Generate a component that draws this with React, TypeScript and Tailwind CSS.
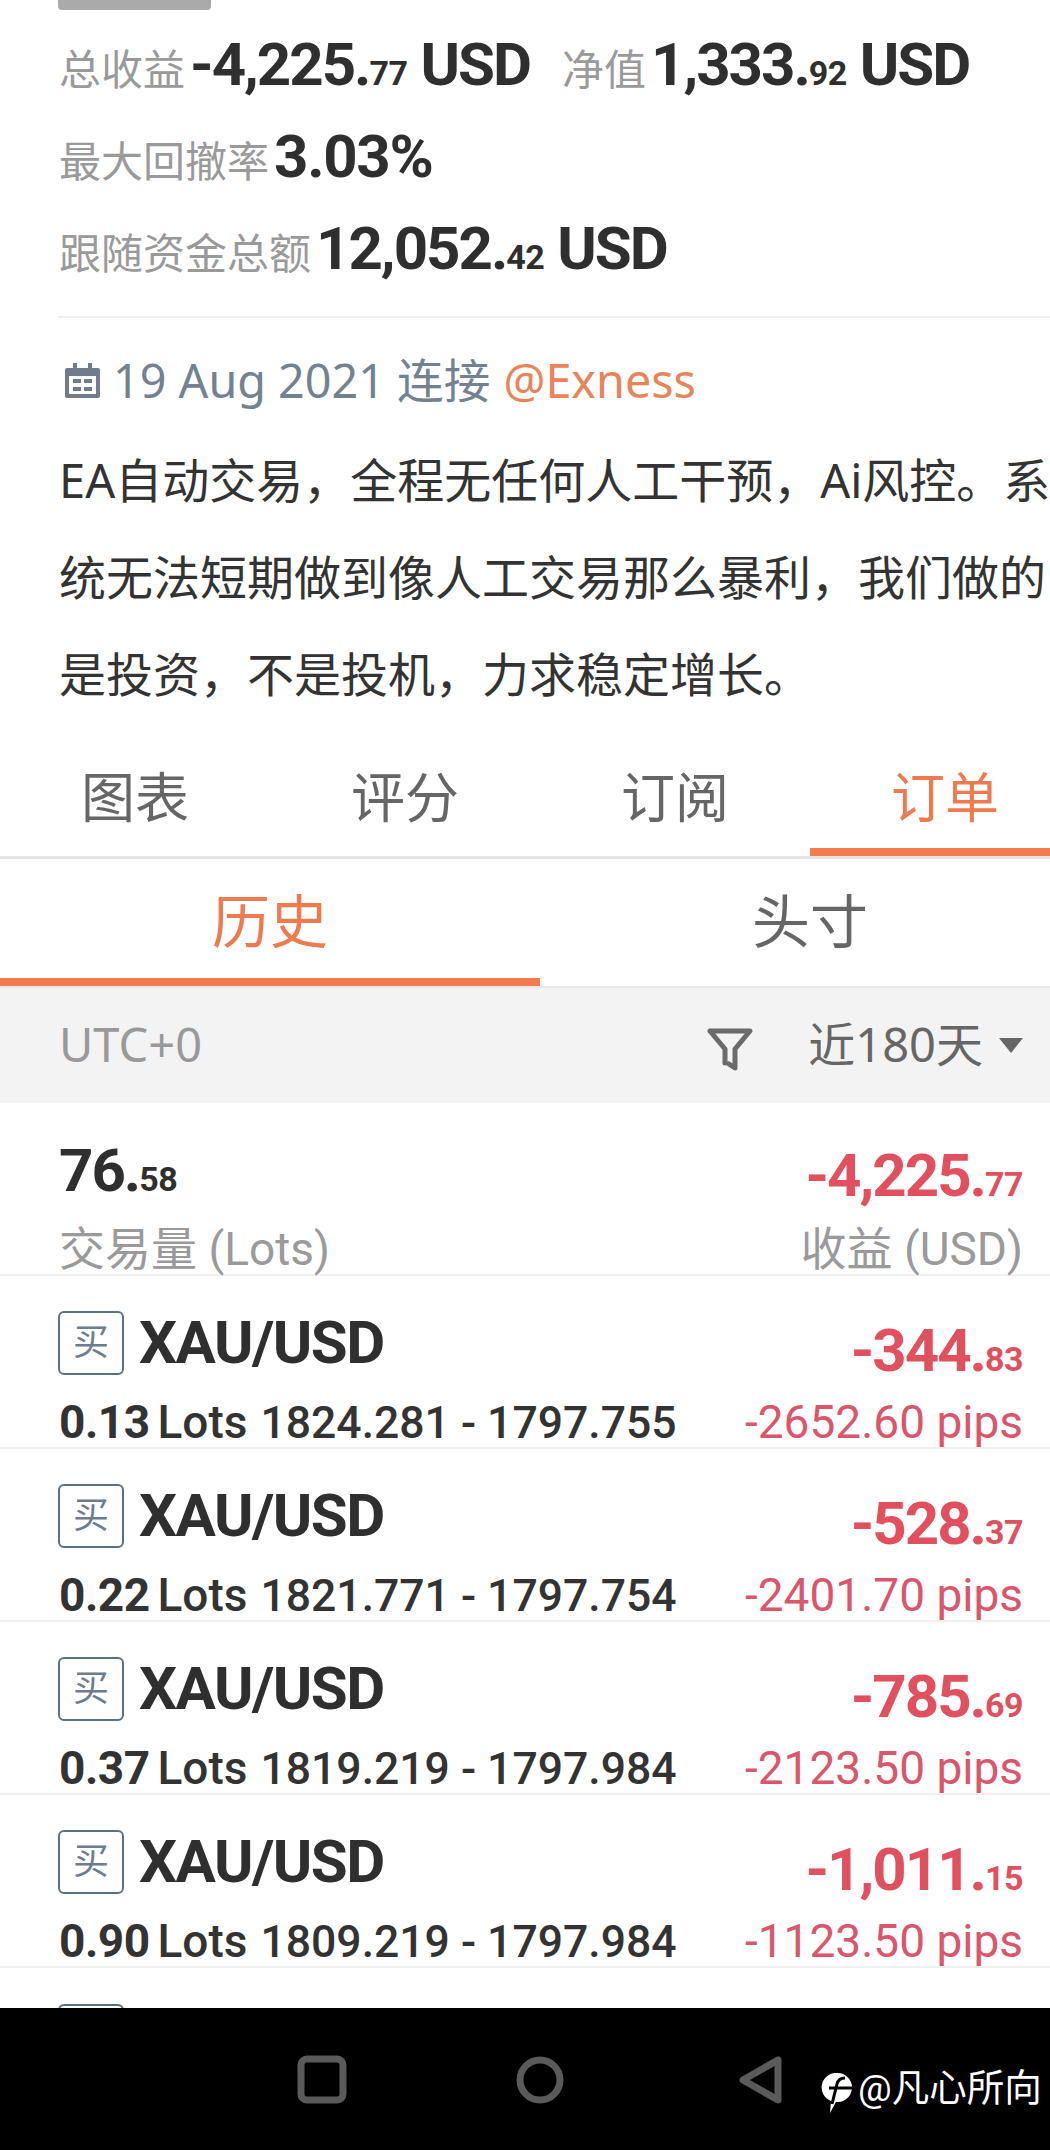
const FONT = "font-['Roboto','Noto_Sans_CJK_SC',sans-serif]";
const NOTO = "font-['Noto_Sans','Noto_Sans_CJK_SC',sans-serif]";

function Money({ whole, dec, color = "" }: { whole: string; dec: string; color?: string }) {
  return (
    <span className={`font-bold ${color}`}>
      <span className="text-[60px] tracking-[-2px]">{whole}</span>
      <span className="text-[34px] tracking-[-0.5px]">{dec}</span>
    </span>
  );
}

function Stat({ label, children }: { label: string; children: React.ReactNode }) {
  return (
    <>
      <span className="text-[42px] text-[#9a9a9a] mr-[5px]">{label}</span>
      {children}
    </>
  );
}

function Usd() {
  return <span className="text-[60px] font-bold tracking-[-2px]"> USD</span>;
}

const orders = [
  { pnl: "-344.", dec: "83", lots: "0.13", range: "1824.281 - 1797.755", pips: "-2652.60 pips" },
  { pnl: "-528.", dec: "37", lots: "0.22", range: "1821.771 - 1797.754", pips: "-2401.70 pips" },
  { pnl: "-785.", dec: "69", lots: "0.37", range: "1819.219 - 1797.984", pips: "-2123.50 pips" },
  { pnl: "-1,011.", dec: "15", lots: "0.90", range: "1809.219 - 1797.984", pips: "-1123.50 pips" },
];

function Order({ o }: { o: (typeof orders)[number] }) {
  return (
    <div className="h-[173px] border-b-2 border-[#f0f0f0] pr-[27px] pl-[58px] flex flex-col whitespace-nowrap">
      <div className="flex justify-between h-[121px] pt-[35px]">
        <div className="flex items-start">
          <div className="w-[66px] h-[64px] border-2 border-[#5f7080] rounded-[6px] flex items-center justify-center text-[36px] leading-none text-[#6d7d8d]">买</div>
          <span className="ml-[15px] text-[60px] leading-[64px] font-bold tracking-[-1.5px] text-[#2f2f2f]">XAU/USD</span>
        </div>
        <div className="leading-[80px]">
          <Money whole={o.pnl} dec={o.dec} color="text-[#e0505f]" />
        </div>
      </div>
      <div className="flex justify-between items-baseline leading-[50px] text-[#333]">
        <span className="ml-[1px]">
          <b className="text-[46px] tracking-[-0.5px]">{o.lots}</b>
          <span className="ml-[8px] text-[46px] font-medium">Lots</span>
          <span className="ml-[13px] text-[44.5px] font-medium">{o.range}</span>
        </span>
        <span className="text-[#d9566c] text-[46px]">{o.pips}</span>
      </div>
    </div>
  );
}

export default function App() {
  return (
    <div className={`w-[1050px] h-[2150px] overflow-hidden bg-white flex flex-col ${FONT}`}>
      <div className="flex-1 min-h-0 overflow-hidden">
        <div className="ml-[58px] w-[153px] h-[10px] bg-[#aaaaaa] rounded-b-[4px]" />
        <div className="mt-[9px] pl-[59px] whitespace-nowrap text-[#2f2f2f]">
          <div className="h-[92px] leading-[92px]">
            <Stat label="总收益">
              <Money whole="-4,225." dec="77" />
              <Usd />
            </Stat>
            <span className="ml-[32px]" />
            <Stat label="净值">
              <Money whole="1,333." dec="92" />
              <Usd />
            </Stat>
          </div>
          <div className="h-[92px] leading-[92px]">
            <Stat label="最大回撤率">
              <span className="text-[60px] font-bold tracking-[-1.3px]">3.03%</span>
            </Stat>
          </div>
          <div className="h-[92px] leading-[92px]">
            <Stat label="跟随资金总额">
              <Money whole="12,052." dec="42" />
              <Usd />
            </Stat>
          </div>
        </div>
        <div className="ml-[58px] mt-[21px] h-[2px] bg-[#eeeeee]" />
        <div className={`mt-[32px] pl-[65px] flex items-center h-[60px] text-[46.7px] text-[#748290] whitespace-nowrap ${NOTO}`}>
          <svg width="35" height="35" viewBox="0 0 35 35" className="mr-[13px]">
            <path d="M2 5h6V0h4v5h11V0h4v5h6a2 2 0 0 1 2 2v26a2 2 0 0 1-2 2H2a2 2 0 0 1-2-2V7a2 2 0 0 1 2-2z" fill="#6f7c8b" />
            <rect x="4" y="13" width="27" height="18" fill="#fff" />
            <path d="M8 16h8v4H8zM19 16h8v4h-8zM8 24h8v4H8zM19 24h8v4h-8z" fill="#6f7c8b" />
          </svg>
          <span>19 Aug 2021 连接</span>
          <span className="ml-[13px] text-[#e8845a]">@Exness</span>
        </div>
        <div className={`ml-[59px] mt-[22px] text-[47px] leading-[97px] text-[#333] whitespace-nowrap ${NOTO}`}>
          <p>EA自动交易，全程无任何人工干预，Ai风控。系</p>
          <p>统无法短期做到像人工交易那么暴利，我们做的</p>
          <p>是投资，不是投机，力求稳定增长。</p>
        </div>

        <div className="mt-[21px] h-[115px] border-b-[3px] border-[#e5e5e5] flex w-[1080px]">
          {["图表", "评分", "订阅", "订单"].map((t, i) => (
            <div key={t} className={`w-[270px] h-[112px] flex items-center justify-center text-[54px] leading-none border-y-[8px] border-t-transparent ${i === 3 ? "text-[#ee7b50] border-b-[#f47b4d]" : "text-[#666] border-b-transparent"}`}>
              {t}
            </div>
          ))}
        </div>
        <div className="h-[129px] border-b-2 border-[#e8e8e8] flex w-[1080px]">
          <div className="w-[540px] h-[127px] flex items-center justify-center text-[58px] leading-none text-[#ee7b50] border-y-[8px] border-t-transparent border-b-[#f47b4d]">历史</div>
          <div className="w-[540px] h-[127px] flex items-center justify-center text-[58px] leading-none text-[#666]">头寸</div>
        </div>
        <div className={`h-[115px] bg-[#f3f3f3] flex items-center pl-[59px] pr-[27px] pb-[3px] text-[47px] leading-none ${NOTO}`}>
          <span className="text-[#999]">UTC+0</span>
          <svg width="46" height="44" viewBox="0 0 46 44" fill="none" className="ml-auto mr-[55px] mt-[9px]">
            <path d="M3 4h40L28 22v19l-6-4M3 4l15 18v14" stroke="#6b6b6b" strokeWidth="5" strokeLinejoin="round" strokeLinecap="round" />
          </svg>
          <span className="text-[#666]">近180天</span>
          <svg width="24" height="15" viewBox="0 0 24 15" className="ml-[16px] mt-[3px]">
            <path d="M0 0h24L12 15z" fill="#666" />
          </svg>
        </div>
        <div className="h-[173px] border-b-2 border-[#f0f0f0] pr-[27px] pl-[59px] flex justify-between whitespace-nowrap">
          <div>
            <div className="h-[121px] pt-[33px] leading-[70px] text-[#2f2f2f]">
              <Money whole="76." dec="58" />
            </div>
            <div className="text-[46px] leading-[50px] text-[#9a9a9a]">交易量 (Lots)</div>
          </div>
          <div className="text-right">
            <div className="h-[121px] pt-[38px] leading-[70px]">
              <Money whole="-4,225." dec="77" color="text-[#e0505f]" />
            </div>
            <div className="text-[46px] leading-[50px] text-[#9a9a9a]">收益 (USD)</div>
          </div>
        </div>
        {orders.map((o) => (
          <Order key={o.lots} o={o} />
        ))}
        <div className="ml-[58px] mt-[36px] w-[66px] h-[64px] border-2 border-[#5f7080] rounded-[6px]" />
      </div>
      <div className="h-[142px] bg-black relative">
        <svg width="1050" height="142" viewBox="0 0 1050 142" fill="none">
          <rect x="301" y="51" width="42" height="41" rx="6" stroke="#5a5a5a" strokeWidth="7" />
          <circle cx="540" cy="72" r="20" stroke="#5a5a5a" strokeWidth="7" />
          <path d="M778 52v40L743 72z" stroke="#5a5a5a" strokeWidth="7" strokeLinejoin="round" />
        </svg>
        <div className="absolute left-[820px] top-[65px] flex items-start">
          <svg width="35" height="40" viewBox="0 0 35 40">
            <path d="M17.5 0a14.5 14.5 0 0 1 0 29H16L10 40l1-12A14.5 14.5 0 0 1 17.5 0z" fill="#fff" />
            <path d="M25 5c-5 0-7 2-8 6l-5 20M9 15h26" stroke="#000" strokeWidth="3" fill="none" />
          </svg>
          <span className="ml-[3px] text-[37.5px] leading-[30px] text-white whitespace-nowrap">@凡心所向</span>
        </div>
      </div>
    </div>
  );
}
